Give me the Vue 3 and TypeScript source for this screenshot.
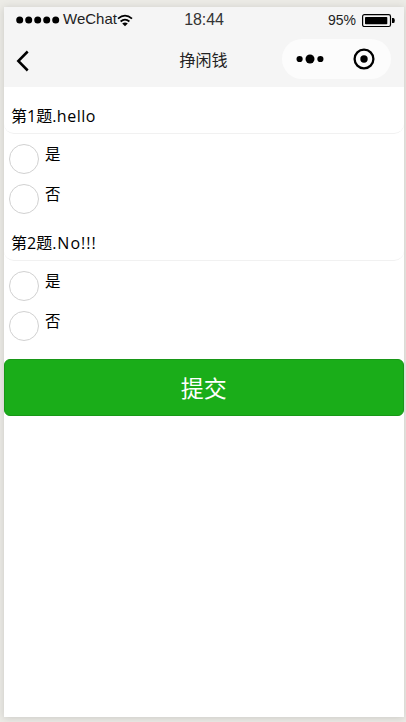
<script setup lang="ts">
interface Question {
  id: number
  title: string
  options: string[]
}

const questions: Question[] = [
  { id: 1, title: 'hello', options: ['是', '否'] },
  { id: 2, title: 'No!!!', options: ['是', '否'] },
]
</script>

<template>
  <main class="phone">
    <header class="header">
      <div class="status">
        <div class="carrier">
          <svg class="signal" width="44" height="8" viewBox="0 0 44 8">
            <circle v-for="n in 5" :key="n" :cx="n * 9 - 5.3" cy="4" r="3.5" />
          </svg>
          <span class="carrier-name">WeChat</span>
          <svg class="wifi" width="16" height="13" viewBox="0 0 16 13">
            <path d="M1 4.6Q8-1.4 15 4.6M3.6 7.5Q8 3.7 12.4 7.5" fill="none" stroke="#000" stroke-width="1.8" />
            <path d="M5.2 9.5Q8 7.4 10.8 9.5L8 12.3Z" />
          </svg>
        </div>
        <span class="time">18:44</span>
        <div class="power">
          <span class="percent">95%</span>
          <svg class="battery" width="34" height="14" viewBox="0 0 34 14">
            <rect x="0.6" y="0.6" width="27.9" height="11.9" rx="1.8" fill="none" stroke="#000" stroke-width="1.2" />
            <rect x="3" y="3" width="22.3" height="7.2" rx="0.8" />
            <path d="M30 4h1.5q1.3 0 1.3 2.5T31.5 9H30Z" />
          </svg>
        </div>
      </div>
      <nav class="nav">
        <svg class="back" width="14" height="22" viewBox="0 0 14 22">
          <path d="M11.7 1.5L2.3 11L11.7 20.5" fill="none" stroke="#000" stroke-width="2.5" />
        </svg>
        <h1 class="title">挣闲钱</h1>
        <div class="capsule">
          <svg width="28" height="10" viewBox="0 0 28 10">
            <circle cx="3.6" cy="5" r="3.1" />
            <circle cx="14" cy="5" r="4.5" />
            <circle cx="24.4" cy="5" r="3.1" />
          </svg>
          <svg width="22" height="22" viewBox="0 0 22 22">
            <circle cx="11" cy="11" r="9.4" fill="none" stroke="#000" stroke-width="2.3" />
            <circle cx="11" cy="11" r="3.7" />
          </svg>
        </div>
      </nav>
    </header>
    <form class="form" @submit.prevent>
      <section v-for="q in questions" :key="q.id" class="question">
        <h2 class="question-title">第{{ q.id }}题<span class="question-name">.{{ q.title }}</span></h2>
        <label v-for="option in q.options" :key="option" class="option">
          <input class="radio" type="radio" :name="`q${q.id}`" :value="option" />
          <span class="option-text">{{ option }}</span>
        </label>
      </section>
      <button class="submit" type="submit">提交</button>
    </form>
  </main>
</template>

<style>
body {
  background: #ecebe6;
}
</style>

<style scoped>
.phone {
  box-sizing: border-box;
  width: 400px;
  height: 710px;
  margin: 7px 2px 5px 4px;
  background: #fff;
  box-shadow: 0 1px 8px rgba(0, 0, 0, 0.15);
  color: #000;
  font-family: "Open Sans", "Noto Sans CJK SC", sans-serif;
}
svg {
  display: block;
  flex: none;
}
.header {
  height: 80px;
  background: #f5f5f5;
}
.status {
  display: grid;
  grid-template-columns: 1fr auto 1fr;
  height: 26px;
  padding: 0 8px 0 12px;
  align-items: center;
  font-family: "Liberation Sans", sans-serif;
  font-size: 14px;
  color: #222;
}
.carrier,
.power {
  display: flex;
  align-items: center;
}
.carrier-name {
  margin-left: 3px;
  padding-bottom: 2px;
  font-size: 15px;
  line-height: 22px;
}
.time {
  margin-right: 4px;
  font-size: 16px;
  letter-spacing: -0.1px;
  color: #333;
}
.power {
  justify-content: flex-end;
  gap: 6px;
}
.percent {
  padding-bottom: 1px;
}
.battery {
  margin-top: 2px;
}
.nav {
  display: grid;
  grid-template-columns: 1fr auto 1fr;
  height: 54px;
  padding: 0 13px 0 12px;
  align-items: center;
}
.back {
  margin-top: 2px;
}
.title {
  margin: 0;
  color: #222;
  font-size: 16px;
  font-weight: 400;
  line-height: 24px;
}
.capsule {
  box-sizing: border-box;
  display: flex;
  align-items: center;
  justify-content: space-between;
  justify-self: end;
  width: 109px;
  height: 40px;
  margin-bottom: 2px;
  padding: 0 16px 0 14px;
  border-radius: 20px;
  background: #fcfcfc;
}
.form {
  padding-top: 6px;
}
.question {
  height: 127px;
}
.question-title {
  box-sizing: border-box;
  height: 41px;
  margin: 0 0 10px;
  padding-left: 7px;
  border-bottom: 1px solid #f1f1f1;
  border-radius: 10px;
  font-size: 16px;
  font-weight: 400;
  line-height: 46px;
}
.question-name {
  letter-spacing: 0.5px;
}
.question:nth-child(2) .question-name {
  letter-spacing: 1px;
}
.option {
  display: flex;
  height: 40px;
  padding-left: 5px;
}
.radio {
  box-sizing: border-box;
  width: 30px;
  height: 30px;
  margin: 0 6px 0 0;
  border: 1px solid #d1d1d1;
  border-radius: 50%;
  background: #fff;
  appearance: none;
}
.option-text {
  font-size: 15.5px;
  line-height: 21px;
}
.submit {
  box-sizing: border-box;
  display: block;
  width: 399.5px;
  height: 57px;
  margin: 12px 0 0;
  padding: 0;
  border: 1px solid #189717;
  border-radius: 6px;
  background: #1aad19;
  color: #fff;
  font: 400 23px/55px "Noto Sans CJK SC", sans-serif;
}
</style>
